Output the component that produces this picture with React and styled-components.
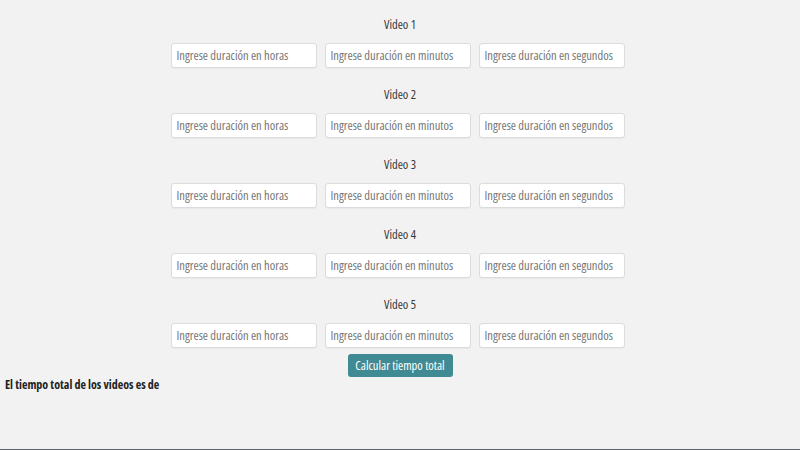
import React from 'react';
import styled, { createGlobalStyle } from 'styled-components';

const Global = createGlobalStyle`
  html, body {
    margin: 0;
    padding: 0;
    background: #f2f2f2;
  }
  body {
    font-family: 'Open Sans', 'Liberation Sans', Arial, sans-serif;
    font-stretch: 75%;
    color: #333;
  }
  input, button {
    font-family: inherit;
    font-stretch: inherit;
  }
`;

const Page = styled.div`
  width: 800px;
  height: 450px;
  box-sizing: border-box;
  padding-top: 17px;
  display: flex;
  flex-direction: column;
  position: relative;
`;

const Block = styled.div`
  display: flex;
  flex-direction: column;
  align-items: center;
  margin-bottom: 19px;
`;

const Title = styled.div`
  font-size: 12.5px;
  line-height: 16px;
  color: #3a3a3a;
  margin-bottom: 10px;
`;

const Row = styled.div`
  display: flex;
  gap: 8px;
  margin-left: -5px;
`;

const Field = styled.input`
  width: 146px;
  height: 25px;
  box-sizing: border-box;
  border: 1px solid #dcdcdc;
  border-radius: 3px;
  background: #fff;
  padding: 0 5px;
  font-size: 12.5px;
  color: #333;
  outline: none;
  box-shadow: 0 1px 1px rgba(0, 0, 0, 0.04);

  &::placeholder {
    color: #767676;
  }
`;

const Button = styled.button`
  align-self: center;
  margin-top: -13px;
  width: 105px;
  height: 23px;
  border: none;
  border-radius: 3px;
  background: #3f8a93;
  color: #fff;
  font-size: 12.5px;
  padding: 0;
  white-space: nowrap;
  cursor: pointer;
`;

const Result = styled.p`
  margin: 0 0 0 5px;
  font-size: 12px;
  line-height: 16px;
  font-weight: bold;
  color: #222;
`;

const Taskbar = styled.div`
  position: absolute;
  left: 0;
  right: 0;
  bottom: 0;
  height: 1px;
  background: #5f6266;
`;

const videos = [1, 2, 3, 4, 5];

export default function App() {
  return (
    <Page>
      <Global />
      {videos.map((n) => (
        <Block key={n}>
          <Title>Video {n}</Title>
          <Row>
            <Field type="text" inputMode="numeric" placeholder="Ingrese duración en horas" />
            <Field type="text" inputMode="numeric" placeholder="Ingrese duración en minutos" />
            <Field type="text" inputMode="numeric" placeholder="Ingrese duración en segundos" />
          </Row>
        </Block>
      ))}
      <Button>Calcular tiempo total</Button>
      <Result>El tiempo total de los videos es de</Result>
      <Taskbar />
    </Page>
  );
}
